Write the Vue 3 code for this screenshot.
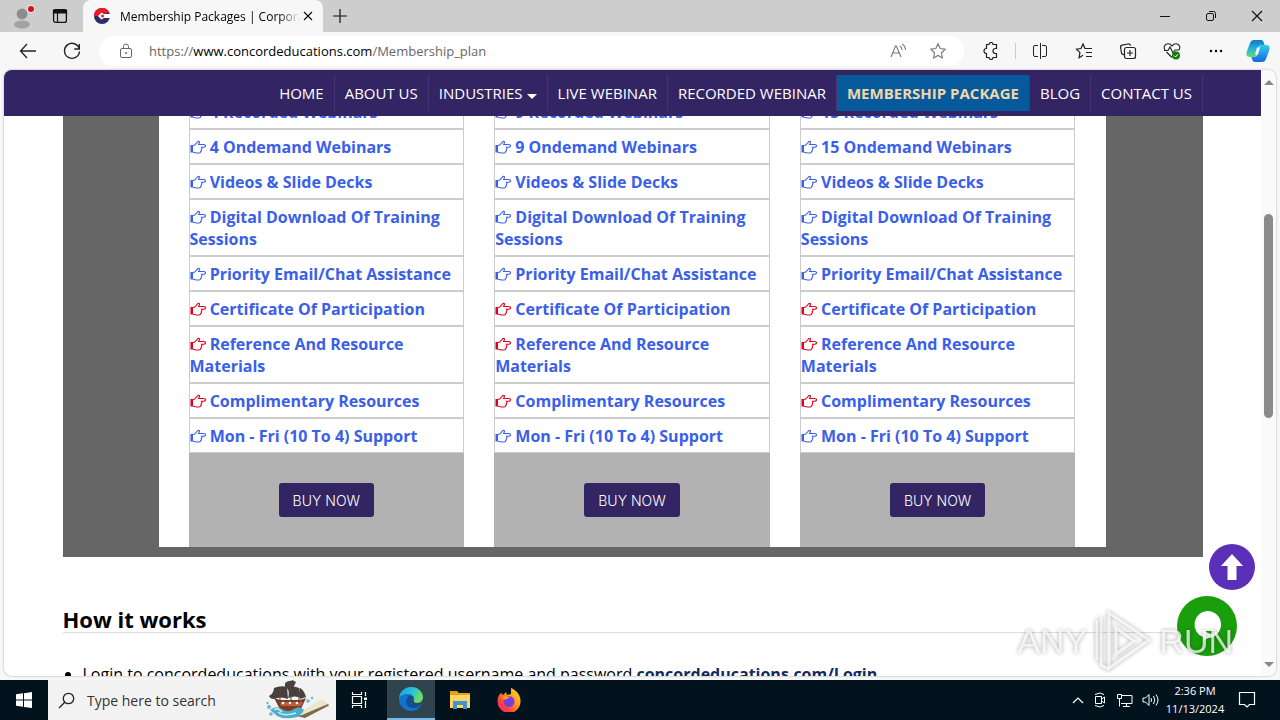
<script setup>
const nav = [
  { t: 'HOME' },
  { t: 'ABOUT US' },
  { t: 'INDUSTRIES', drop: true },
  { t: 'LIVE WEBINAR' },
  { t: 'RECORDED WEBINAR' },
  { t: 'MEMBERSHIP PACKAGE', active: true },
  { t: 'BLOG' },
  { t: 'CONTACT US' }
]
const common = [
  { t: 'Videos & Slide Decks' },
  { t: 'Digital Download Of Training Sessions' },
  { t: 'Priority Email/Chat Assistance' },
  { t: 'Certificate Of Participation', red: true },
  { t: 'Reference And Resource Materials', red: true },
  { t: 'Complimentary Resources', red: true },
  { t: 'Mon - Fri (10 To 4) Support' }
]
const plans = [[4, 4], [9, 9], [15, 15]].map(([r, o]) => [
  { t: r + ' Recorded Webinars' },
  { t: o + ' Ondemand Webinars' },
  ...common
])
</script>

<template>
  <div class="screen">
    <header class="tabs">
      <div class="lead">
        <button class="ib" aria-label="Profile">
          <svg width="26" height="28" viewBox="0 0 26 28"><circle cx="13" cy="12" r="5.4" fill="#8d8d8d"/><ellipse cx="13" cy="22.500" rx="8" ry="4" fill="#a3a3a3"/><circle cx="22" cy="7" r="4" fill="#e4e4e4"/><circle cx="22" cy="7" r="3" fill="#d80f16"/></svg>
        </button>
        <button class="ib" aria-label="Tab actions">
          <svg width="16" height="16" viewBox="0 0 16 16"><rect x="1.600" y="1.600" width="12.800" height="12.800" rx="2" fill="none" stroke="#111" stroke-width="1.300"/><path d="M1.500 2h13v3h-13zM5.500 5v9" fill="#111" stroke="#111" stroke-width="1.200"/></svg>
        </button>
      </div>
      <div class="tab">
        <svg width="16" height="16" viewBox="0 0 16 16"><circle cx="8" cy="8" r="8" fill="#2d2c6b"/><path d="M0 8a8 8 0 0 1 15-4l-3.500 2A4 4 0 0 0 4.500 8z" fill="#ed1c24"/><path d="M4 8l3.500-3.500L10 6h6v4h-6l-2.500 1.500z" fill="#fff"/><circle cx="8.500" cy="8" r="1.500" fill="#ed1c24"/></svg>
        <span class="title">Membership Packages | Corporate</span>
        <button class="ib" aria-label="Close tab"><svg width="10" height="10" viewBox="0 0 10 10"><path d="M1 1l8 8M9 1L1 9" stroke="#111" stroke-width="1.200"/></svg></button>
      </div>
      <button class="ib plus" aria-label="New tab"><svg width="16" height="16" viewBox="0 0 16 16"><path d="M8 1v14M1 8h14" stroke="#111" stroke-width="1.200"/></svg></button>
      <div class="win">
        <button class="ib" aria-label="Minimize"><svg width="12" height="12" viewBox="0 0 12 12"><path d="M1 6.500h10" stroke="#111"/></svg></button>
        <button class="ib" aria-label="Restore"><svg width="12" height="12" viewBox="0 0 12 12"><rect x="1.500" y="3.500" width="7" height="7" rx="1.500" fill="none" stroke="#111"/><path d="M4 1.500h4.500a2 2 0 0 1 2 2V8" fill="none" stroke="#111"/></svg></button>
        <button class="ib" aria-label="Close"><svg width="12" height="12" viewBox="0 0 12 12"><path d="M1 1l10 10M11 1L1 11" stroke="#111" stroke-width="1.200"/></svg></button>
      </div>
    </header>

    <div class="bar">
      <button class="ib nb" aria-label="Back"><svg width="18" height="16" viewBox="0 0 18 16"><path d="M8 1L1.500 8 8 15M1.500 8H17" fill="none" stroke="#222" stroke-width="1.300"/></svg></button>
      <button class="ib nb" aria-label="Refresh"><svg width="18" height="18" viewBox="0 0 18 18"><path d="M16.300 7A7.500 7.500 0 1 0 16.500 9.500M16.300 2v5h-5" fill="none" stroke="#222" stroke-width="1.400"/></svg></button>
      <div class="omni">
        <svg class="lock" width="14" height="16" viewBox="0 0 14 16"><rect x="1.500" y="5.500" width="11" height="9" rx="1.500" fill="none" stroke="#666"/><path d="M4.500 5.500V3.500a2.500 2.500 0 0 1 5 0v2" fill="none" stroke="#666"/><circle cx="7" cy="10" r="1" fill="#666"/></svg>
        <div class="url"><span>https://</span><b>www.concordeducations.com</b><span>/Membership_plan</span></div>
        <button class="ib" aria-label="Read aloud"><svg width="17" height="16" viewBox="0 0 17 16"><path d="M1 14L5.500 3h.8L11 14M2.700 10h6.600M10 3q2 1.500 2 4M12 1q3.500 2 3.500 6" fill="none" stroke="#777" stroke-width="1.100"/></svg></button>
        <button class="ib" aria-label="Favorite"><svg width="18" height="18" viewBox="0 0 18 18"><path d="M9 1.800l2.200 4.700 5 .7-3.700 3.600.9 5.200L9 13.500 4.600 16l.9-5.200L1.800 7.200l5-.7z" fill="none" stroke="#777" stroke-width="1.100"/></svg></button>
      </div>
      <div class="tools">
        <button class="ib" aria-label="Extensions"><svg width="16" height="18" viewBox="0 0 16 18"><path d="M4 2.500h2a2 2 0 0 1 4 0h3.500V6.500h-1a2 2 0 0 0 0 5h1v4H10a2 2 0 0 1-4 0H3.500V11.500a2.500 2.500 0 0 1 0-5V2.500z" fill="none" stroke="#222" stroke-width="1.200"/></svg></button>
        <i class="sep"></i>
        <button class="ib" aria-label="Split screen"><svg width="16" height="16" viewBox="0 0 16 16"><path d="M6 2.500H3A1.500 1.500 0 0 0 1.500 4v8A1.500 1.500 0 0 0 3 13.500h3M10 2.500h3A1.500 1.500 0 0 1 14.500 4v8a1.500 1.500 0 0 1-1.500 1.500h-3M8.500 0v16" fill="none" stroke="#222"/></svg></button>
        <button class="ib" aria-label="Favorites"><svg width="18" height="18" viewBox="0 0 18 18"><path d="M10 6.500L8 2 6 6.500l-4.500.7 3.400 3.500-.8 5L8 13.300M8 2l2 4.500h7M11 10.500h6M11 14.500h6" fill="none" stroke="#222" stroke-width="1.200"/></svg></button>
        <button class="ib" aria-label="Collections"><svg width="18" height="18" viewBox="0 0 18 18"><path d="M5 12.500a2 2 0 0 1-2.500-1.500L1.600 5.500a2 2 0 0 1 1.500-2.300l6-1.200a2 2 0 0 1 2.400 1.700" fill="none" stroke="#222" stroke-width="1.200"/><rect x="5.500" y="5.500" width="11" height="11" rx="2" fill="none" stroke="#222" stroke-width="1.200"/><path d="M11 8v6M8 11h6" stroke="#222" stroke-width="1.200"/></svg></button>
        <button class="ib" aria-label="Browser essentials"><svg width="18" height="18" viewBox="0 0 18 18"><path d="M2 8C0 5 2 1.800 5 1.800c2 0 3.200 1 4 2.200.8-1.200 2-2.200 4-2.200 3 0 5 3.200 3 6.200M3.500 10L9 15.500M1 8.500h4l2-3.500 3 6 2-3h4" fill="none" stroke="#222" stroke-width="1.100"/><circle cx="13" cy="13.500" r="4" fill="#107c10"/><path d="M11 13.500l1.500 1.500 2.500-3" fill="none" stroke="#fff"/></svg></button>
        <button class="ib" aria-label="More"><svg width="14" height="4" viewBox="0 0 14 4"><circle cx="2" cy="2" r="1.200"/><circle cx="7" cy="2" r="1.200"/><circle cx="12" cy="2" r="1.200"/></svg></button>
        <button class="ib cop" aria-label="Copilot"><svg width="24" height="24" viewBox="0 0 24 24"><defs><linearGradient id="cp1" x1="0" y1="0" x2="0" y2="1"><stop offset="0" stop-color="#1377c9"/><stop offset=".5" stop-color="#22b4d8"/><stop offset="1" stop-color="#6ad87c"/></linearGradient><linearGradient id="cp2" x1="0" y1="0" x2="0" y2="1"><stop offset="0" stop-color="#34c8f5"/><stop offset="1" stop-color="#1769d8"/></linearGradient></defs><path d="M8 1h7c2 0 2.500 1.500 3 3l.5 2H16c-2 0-3 1-3.500 3L10.500 16c-.5 1.500-1 2-2.500 2H4c-4 0-4-3-3-6L4 4c.8-2 2-3 4-3z" fill="url(#cp1)"/><path d="M16 23H9c-2 0-2.500-1.500-3-3l-.5-2H8c2 0 3-1 3.500-3L13.500 8c.5-1.500 1-2 2.500-2h4c4 0 4 3 3 6l-3 8c-.8 2-2 3-4 3z" fill="url(#cp2)"/><path d="M11 8.500h3l-2 7h-3z" fill="#fff"/></svg></button>
      </div>
    </div>

    <div class="view">
      <main class="page">
        <nav class="nav">
          <a v-for="n in nav" :key="n.t" href="#" :class="{ active: n.active }">{{ n.t }}<i v-if="n.drop" class="caret"></i></a>
        </nav>
        <div class="scroll">
          <div class="container">
            <section class="band">
              <div class="plans">
                <article v-for="(p, i) in plans" :key="i" class="plan">
                  <ul>
                    <li v-for="f in p" :key="f.t"><svg :class="{ red: f.red }" class="hand" width="16" height="14" viewBox="0 0 16 14"><path d="M.5 5h2.500v7.500H.500z" fill="currentColor"/><path d="M3 5.300h1.500L8 1.500q1.500-.6 1.500 1L8.600 4.500H14q1.500.2 1.500 1.300T14 7.200h-2.500q1 1.600-.3 2.400.6 1.400-.6 2 0 1.400-1.400 1.400H6.500L3 12.300" fill="none" stroke="currentColor" stroke-width="1.100"/></svg> {{ f.t }}</li>
                  </ul>
                  <div class="buy"><button>BUY NOW</button></div>
                </article>
              </div>
            </section>
            <section class="how">
              <h2>How it works</h2>
              <ul><li>Login to concordeducations with your registered username and password <a href="#">concordeducations.com/Login</a></li></ul>
            </section>
          </div>
        </div>
      </main>
      <div class="sb"><i class="up"></i><i class="thumb"></i><i class="down"></i></div>
      <button class="top" aria-label="Back to top"><svg width="24" height="28" viewBox="0 0 24 28"><path d="M12 1l11 12h-6.500v14h-9V13H1z" fill="#fff"/></svg></button>
      <button class="chat" aria-label="Chat"><svg width="30" height="32" viewBox="0 0 30 32"><path d="M15 1a13.500 13.500 0 0 1 1 27l-5 3v-4A13.500 13.500 0 0 1 15 1z" fill="#fff"/><path d="M13 21h11q-4 6-11 0z" fill="#1a9e0c"/></svg></button>
      <div class="mark">
        <span>ANY</span>
        <svg width="60" height="64" viewBox="0 0 60 64"><path d="M16 4L56 31 16 59zM23 19v26l18-13z"/><path d="M8 8v48l8 4M4 11v40"/></svg>
        <span>RUN</span>
      </div>
    </div>

    <footer class="task">
      <button class="start" aria-label="Start"><svg width="16" height="16" viewBox="0 0 16 16"><path d="M0 2.200L7 1.300v6.300H0zM8 1.200L16 0v7.600H8zM0 8.500h7v6.300l-7-1zM8 8.500h8V16l-8-1.100z" fill="#fff"/></svg></button>
      <label class="search">
        <svg width="17" height="17" viewBox="0 0 17 17"><circle cx="10.500" cy="6.500" r="5.200" fill="none" stroke="#222" stroke-width="1.300"/><path d="M6.800 10.200L1 16" stroke="#222" stroke-width="1.300"/></svg>
        <input type="text" placeholder="Type here to search" aria-label="Search">
        <svg width="64" height="40" viewBox="0 0 64 40"><path d="M34 32l22-13 6 5-24 12z" fill="#ece4cc"/><path d="M36 35l26-11 1 1.500-24 12.500-9-2z" fill="#7a6a48"/><path d="M8 18l7 13h19l6-13-6 2H14z" fill="#7d3a25"/><path d="M13 22h24l-2 4H15z" fill="#b9603c"/><g fill="#47403f"><path d="M8 8q7-3 13-1l1 12q-7-3-14 0-4 0-5-3 5-3 5-8zM21 8q6-3 12 0l2 10q-6-3-13 0 2-6-1-10zM34 8q4 2 6 9l-6 2zM19 3q5-4 11-1l-3 6h-8zM26 0l4 2-5 2z"/></g><path d="M25 2v22M14 7v17M33 8v15" stroke="#5d4030"/><g fill="#fff"><circle cx="17" cy="23" r="1.300"/><circle cx="24" cy="23" r="1.300"/><circle cx="31" cy="23" r="1.300"/></g><path d="M4 30q6-5 12-1t12 0 10 1q-3 7-12 8-14 1-17-4z" fill="#4badc7"/><path d="M12 32q6 5 18 1M8 30q4-3 8 2" stroke="#c3eaf2" stroke-width="1.500" fill="none"/><g fill="#63b9d2"><circle cx="3" cy="27" r="2"/><circle cx="1.500" cy="23" r="1.200"/><circle cx="5" cy="34" r="1.800"/><circle cx="42" cy="21" r="1.800"/><circle cx="46" cy="18" r="1.200"/></g></svg>
      </label>
      <button class="app tv" aria-label="Task view"><svg width="18" height="16" viewBox="0 0 18 16"><path d="M1.500 0v2.500h9V0M1.500 16v-2.500h9V16M1.500 4.500h9v7h-9zM14.500 0v4M14.500 9v7" fill="none" stroke="#fff" stroke-width="1.200"/><path d="M13 5.500h3v2.500h-3z" fill="#fff"/></svg></button>
      <button class="app on" aria-label="Edge"><svg width="24" height="24" viewBox="0 0 24 24"><defs><linearGradient id="e1" x1="0" y1="0" x2="1" y2=".4"><stop offset="0" stop-color="#1a9de0"/><stop offset=".6" stop-color="#2cc3d6"/><stop offset="1" stop-color="#6fdc5a"/></linearGradient></defs><circle cx="12" cy="12" r="12" fill="#1473c8"/><path d="M0 11C1 4 6 0 12 0c7 0 12 5 12 10 0 4-3 6-6 6-4 0-4-2-3-3 1-3-2-6-6-6-5 0-8 2-9 4z" fill="url(#e1)"/><path d="M9 10c-4 5-1 11 5 11 4 0 6-1 8.500-3-2.500 1-8.500 1-9-4 0-2 1-2 1-3 0-2-3-4-5.500-1z" fill="#0d4f9c"/><path d="M13 16c2 3 7 3 10 1l1-3v-2c-1 3-3 4-6 4-3 0-4-1.500-3-3-2 0-2.500 1.500-2 3z" fill="#34474f"/></svg></button>
      <button class="app" aria-label="File Explorer"><svg width="22" height="20" viewBox="0 0 22 20"><path d="M1 1h7l2 2h11v15H1z" fill="#e3a21d"/><path d="M1 5h20v13H1z" fill="#ffd664"/><path d="M4 19v-8h14v8h-4v-4H8v4z" fill="#3f94cf"/></svg></button>
      <button class="app" aria-label="Firefox"><svg width="24" height="24" viewBox="0 0 24 24"><defs><linearGradient id="f1" x1="1" y1="0" x2="0" y2="1"><stop offset="0" stop-color="#ffe226"/><stop offset=".4" stop-color="#ff9a1f"/><stop offset=".7" stop-color="#ff4438"/><stop offset="1" stop-color="#e31587"/></linearGradient></defs><path d="M4 5l2 2 3-3 1 3 4-1V0c5 2 10 7 9.500 14A11.500 11.500 0 0 1 .5 13C.5 9 2 7 4 5z" fill="url(#f1)"/><circle cx="12" cy="13.500" r="5.500" fill="#7a3be0"/><path d="M5 9c4-2 6 0 8 0-1 2-4 1-4 3-3-1-4-1-4-3z" fill="#ff9a1f"/></svg></button>
      <div class="tray">
        <svg width="12" height="8" viewBox="0 0 12 8"><path d="M1 7l5-5 5 5" fill="none" stroke="#fff" stroke-width="1.200"/></svg>
        <svg width="14" height="18" viewBox="0 0 14 18"><path d="M2 3.500q5-3 9 0M2 14.500q5 3 9 0M2.500 5.500h6v7h-6zM8.500 8l3-2v6l-3-2" fill="none" stroke="#fff"/></svg>
        <svg width="17" height="15" viewBox="0 0 17 15"><path d="M5 2.500h11v8H5M7 13.500h7M10.500 10.500v3M1.500 1.500h4v4h-4zM3.500 5.500v8" fill="none" stroke="#fff"/></svg>
        <svg width="18" height="14" viewBox="0 0 18 14"><path d="M1 5h2.500L7 1.500v11L3.500 9H1zM9 5q1 2 0 4M11.500 3q2.500 4 0 8M14 1.500q4 5.500 0 11" fill="none" stroke="#fff"/></svg>
        <div class="clock"><span>2:36 PM</span><span>11/13/2024</span></div>
        <svg width="18" height="18" viewBox="0 0 18 18"><path d="M1.500 1.500h15v12h-5L9 16l-2.500-2.500h-5z" fill="none" stroke="#fff" stroke-width="1.200"/></svg>
      </div>
    </footer>
  </div>
</template>

<style>
html, body { margin: 0; overflow: hidden; }
</style>

<style scoped>
* { box-sizing: border-box; }
.screen { height: 100vh; display: flex; flex-direction: column; background: #f7f7f7; font-family: "Open Sans", "Noto Sans", sans-serif; color: #000; }
button { border: 0; background: none; padding: 0; font-family: inherit; }
svg { display: block; flex: none; }
ul { margin: 0; padding: 0; }
.ib { display: flex; align-items: center; justify-content: center; flex: none; }
.tabs { height: 32px; flex: none; display: flex; background: #cdcdcd; }
.lead { width: 83px; display: flex; align-items: center; gap: 17px; padding-left: 9px; }
.tab { width: 240px; display: flex; align-items: center; background: #f7f7f7; border-radius: 8px 8px 0 0; padding: 0 10px 0 11px; }
.title { flex: 1; margin: 0 3px 0 10px; font-size: 12px; white-space: nowrap; overflow: hidden; mask-image: linear-gradient(90deg, #000 88%, transparent); }
.plus { margin-left: 9px; }
.win { margin-left: auto; display: flex; gap: 34px; padding-right: 17px; }
.bar { height: 38px; flex: none; display: flex; align-items: center; padding: 0 2px 0 16px; }
.nb { width: 24px; margin-right: 20px; }
.nb + .nb { margin-right: 15px; }
.omni { flex: 1; height: 30px; border-radius: 15px; background: #fff; display: flex; align-items: center; gap: 22px; padding: 0 17px 0 20px; }
.url { flex: 1; font-size: 13px; color: #666; white-space: nowrap; margin-left: -6px; }
.url b { font-weight: 400; color: #000; }
.tools { display: flex; align-items: center; margin-left: 5px; }
.tools .ib { width: 44px; }
.tools .cop { width: 40px; }
.sep { width: 1px; height: 16px; background: #ccc; margin: 0 2px; }
.view { position: relative; flex: 1; min-height: 0; margin: 0 4px 4px; display: flex; background: #fff; border-radius: 8px; overflow: hidden; box-shadow: 0 0 2px #999; }
.page { flex: 1; min-width: 0; display: flex; flex-direction: column; }
.nav { height: 46px; flex: none; display: flex; justify-content: flex-end; align-items: center; padding-right: 58px; background: #332463; z-index: 1; }
.nav a { height: 36px; display: flex; align-items: center; padding: 0 10px; border-right: 1px solid #43356f; color: #fff; font-size: 15px; text-decoration: none; white-space: nowrap; }
.nav .active { background: #065a9c; color: #f3d6a6; font-weight: 700; }
.caret { border: 5px solid transparent; border-top-color: #fff; border-bottom: 0; margin: 6px 0 0 4px; }
.scroll { flex: 1; min-height: 0; overflow: hidden; }
.container { max-width: 1140px; margin: -22px auto 0; }
.band { background: #666; padding: 0 97px 10px 96px; }
.plans { background: #fff; padding: 0 30px; display: grid; grid-template-columns: repeat(3, 1fr); gap: 30px; }
.plan li { list-style: none; border: 1px solid #ccc; padding: 6px 0 5px; font-size: 16px; line-height: 22px; font-weight: 700; color: #3a60ea; }
.hand { display: inline-block; vertical-align: -1px; }
.red { color: #e0001b; }
.buy { background: #b2b2b2; padding: 30px 0; display: flex; justify-content: center; }
.buy button { height: 34px; padding: 0 14px; background: #332463; color: #fff; border-radius: 3px; font: 300 14px Inter, sans-serif; }
.how { padding-top: 49px; }
.how h2 { margin: 0 0 28px; font-size: 22px; line-height: 26px; font-weight: 700; border-bottom: 1px solid #ddd; }
.how ul { padding-left: 20px; }
.how li { font-size: 16px; line-height: 26px; white-space: nowrap; }
.how a { color: #12295d; font-weight: 700; text-decoration: none; }
.sb { width: 15px; display: flex; flex-direction: column; align-items: center; background: #fafafa; padding: 10px 0 9px; }
.up, .down { border: 5px solid transparent; }
.up { border-bottom-color: #888; border-top: 0; }
.down { border-top-color: #888; border-bottom: 0; margin-top: auto; }
.thumb { width: 9px; height: 204px; margin-top: 129px; background: #8b8b8b; border-radius: 5px; }
.top { position: absolute; right: 21px; bottom: 86px; width: 46px; height: 46px; border-radius: 50%; background: #5c2fb8; display: flex; align-items: center; justify-content: center; }
.chat { position: absolute; right: 39px; bottom: 20px; width: 60px; height: 60px; border-radius: 50%; background: #1a9e0c; display: flex; align-items: center; justify-content: center; }
.mark { position: absolute; right: 43px; bottom: 3px; display: flex; align-items: center; gap: 6px; color: rgba(255,255,255,.75); font: 34px/64px "Liberation Sans Narrow", "Liberation Sans", sans-serif; filter: drop-shadow(0 0 2px rgba(0,0,0,.45)); }
.mark path { fill: none; stroke: rgba(255,255,255,.75); stroke-width: 3; }
.task { height: 40px; flex: none; display: flex; align-items: stretch; background: #02131e; color: #fff; }
.task button { display: flex; align-items: center; justify-content: center; }
.start { width: 48px; }
.search { width: 288px; display: flex; align-items: center; gap: 12px; padding: 0 6px 0 10px; background: #f2f2f2; }
.search input { flex: 1; min-width: 0; border: 0; background: none; padding: 0; font: 14px "Open Sans", sans-serif; }
.search input::placeholder { color: #333; opacity: 1; }
.app { width: 48px; margin-right: 1px; }
.tv { margin-right: 3px; }
.on { background: #30444e; border-bottom: 2px solid #76b9ed; }
.tray { margin-left: auto; display: flex; align-items: center; gap: 9px; padding-right: 24px; }
.clock { width: 60px; margin: 0 4px 0 -4px; display: flex; flex-direction: column; align-items: center; font-size: 11px; line-height: 18px; }
</style>
